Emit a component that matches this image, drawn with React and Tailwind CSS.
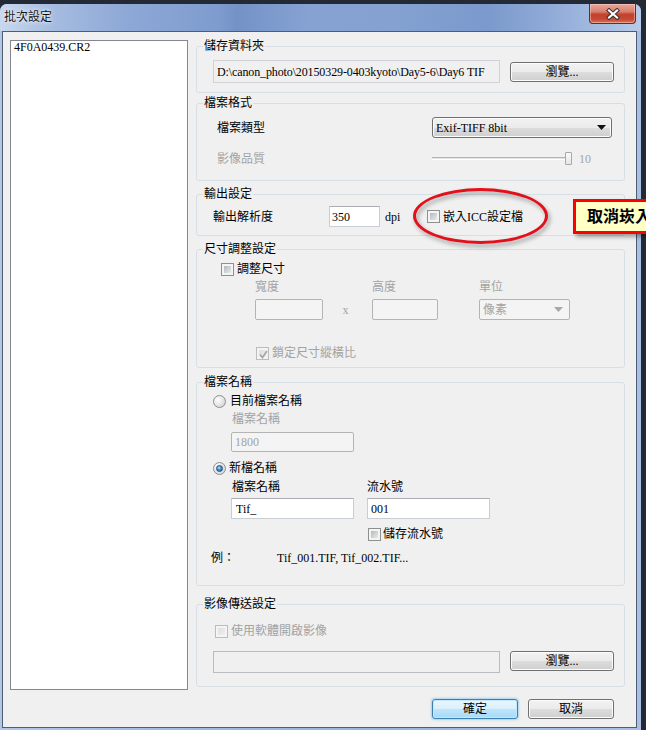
import React from "react";

const BTN =
  "flex items-center justify-center rounded-[3px] border border-[#707070] bg-[linear-gradient(to_bottom,#f2f2f2_0%,#ebebeb_50%,#dddddd_50%,#cfcfcf_100%)] shadow-[inset_0_0_0_1px_#fcfcfc]";
const GREY = "text-[#a3a3a3]";

function Group({ title, className, children }) {
  return (
    <div className={"relative rounded-[3px] border border-[#d5dfe5] " + className}>
      <span className="absolute -top-[8px] left-[6px] bg-[#f0f0f0] px-[1px] leading-[14px] whitespace-nowrap">
        {title}
      </span>
      {children}
    </div>
  );
}

function Checkbox({ disabled, checked, className = "" }) {
  return (
    <span
      className={
        "relative flex h-[13px] w-[13px] shrink-0 border p-[2px] " +
        (disabled ? "border-[#bcbcbc] bg-[#f4f4f4] " : "border-[#8e8f8f] bg-[#f4f4f4] ") +
        className
      }
    >
      <span
        className={
          "flex-1 " +
          (disabled
            ? "bg-[linear-gradient(135deg,#dedede,#efefef)]"
            : "bg-[linear-gradient(135deg,#b3b8be,#e9eaec)]")
        }
      />
      {checked && (
        <svg className="absolute left-[1px] top-[1px]" width="11" height="11" viewBox="0 0 11 11">
          <path d="M2 5.5 L4.5 8.5 L9 2" fill="none" stroke="#a8a8a8" strokeWidth="1.8" />
        </svg>
      )}
    </span>
  );
}

function Radio({ checked }) {
  return (
    <span className="flex h-[13px] w-[13px] shrink-0 items-center justify-center rounded-full border border-[#8e8f8f] bg-[radial-gradient(circle_at_35%_35%,#ffffff_0%,#e8e8e8_45%,#c8cacd_100%)]">
      {checked && (
        <span className="h-[7px] w-[7px] rounded-full border border-[#1b4d7d] bg-[radial-gradient(circle_at_40%_35%,#bfe4ff_0%,#4a9ad8_40%,#14568f_100%)]" />
      )}
    </span>
  );
}

function Input({ className = "", children }) {
  return (
    <div
      className={
        "flex items-center border border-[#c9ced4] border-t-[#abadb3] bg-white pl-[3px] " + className
      }
    >
      {children}
    </div>
  );
}

function DisabledBox({ className = "", children }) {
  return (
    <div
      className={
        "flex items-center rounded-[2px] border border-[#b4b4b4] bg-[#f4f4f4] pl-[3px] text-[#a3a3a3] " +
        className
      }
    >
      {children}
    </div>
  );
}

export default function App() {
  return (
    <div className="relative h-[730px] w-[646px] overflow-hidden bg-[#232a35] pt-[4px] text-[12px] leading-[14px] text-black font-['Liberation_Serif','Noto_Sans_CJK_TC',serif]">
      {/* window */}
      <div className="flex h-[726px] w-[641px] flex-col rounded-t-[7px] bg-[linear-gradient(90deg,#b3c7e3_0%,#a2bae0_30%,#9bb4dc_60%,#a9c0e2_100%)]">
        {/* title bar */}
        <div className="flex h-[27px] shrink-0 items-start justify-between rounded-t-[7px] bg-[linear-gradient(90deg,#c8d8ee_0%,#a6bde0_8%,#8da8d6_20%,#7f9ccf_34%,#7592c7_37%,#86a2d3_48%,#84a1d2_62%,#7b99cc_76%,#8ea9d7_85%,#a8bfe2_95%,#b8cbe8_100%)]">
          <span className="ml-[4px] mt-[6px] leading-[14px] text-[#111] [text-shadow:0_0_5px_rgba(255,255,255,0.95),0_0_2px_rgba(255,255,255,0.9)]">
            批次設定
          </span>
          <div className="mr-[5px] flex h-[20px] w-[47px] items-center justify-center rounded-b-[4px] border border-t-0 border-[#6b2a22] bg-[linear-gradient(to_bottom,#e9a899_0%,#d8806f_40%,#c2412f_55%,#c64a35_80%,#d9735c_100%)] shadow-[inset_0_0_0_1px_rgba(255,220,210,0.45)]">
            <svg width="14" height="12" viewBox="-7 -6 14 12">
              <path d="M-4 -3.5 L4 3.5 M4 -3.5 L-4 3.5" stroke="#3b3030" strokeWidth="4.2" strokeLinecap="square" />
              <path d="M-4 -3.5 L4 3.5 M4 -3.5 L-4 3.5" stroke="#ffffff" strokeWidth="2.2" strokeLinecap="square" />
            </svg>
          </div>
        </div>

        {/* client area */}
        <div className="ml-[2px] flex h-[697px] w-[635px] shrink-0 border border-[#4d5d74] bg-[#f0f0f0]">
          {/* file list */}
          <div className="ml-[7px] mt-[8px] h-[650px] w-[178px] shrink-0 border border-[#828790] bg-white pl-[3px] leading-[13px]">
            4F0A0439.CR2
          </div>

          {/* right column */}
          <div className="ml-[8px] mt-[14px] flex w-[429px] shrink-0 flex-col">
            {/* 儲存資料夾 */}
            <Group title="儲存資料夾" className="h-[47px]">
              <div className="flex items-center pl-[16px] pt-[13px]">
                <div className="flex h-[23px] w-[287px] items-center border border-[#cfd2d6] bg-[#f0f0f0] pl-[3px] whitespace-nowrap tracking-[-0.12px]">
                  {"D:\\canon_photo\\20150329-0403kyoto\\Day5-6\\Day6 TIF"}
                </div>
                <div className={BTN + " ml-[10px] h-[20px] w-[104px]"}>瀏覽...</div>
              </div>
            </Group>

            {/* 檔案格式 */}
            <Group title="檔案格式" className="mt-[10px] h-[78px]">
              <div className="pl-[20px] pt-[13px]">
                <div className="flex h-[21px] items-center">
                  <span className="w-[215px]">檔案類型</span>
                  <div className={BTN + " h-[21px] w-[180px] !justify-between px-[3px]"}>
                    <span>Exif-TIFF 8bit</span>
                    <svg width="9" height="5" viewBox="0 0 9 5" className="mr-[2px]">
                      <path d="M0 0 H9 L4.5 5 Z" fill="#111" />
                    </svg>
                  </div>
                </div>
                <div className={"mt-[10px] flex h-[21px] items-center " + GREY}>
                  <span className="w-[215px]">影像品質</span>
                  <div className="relative flex h-[13px] w-[140px] items-center">
                    <div className="h-[3px] w-[137px] border-t border-b border-[#b2b2b2] border-b-white bg-[#e4e4e4]" />
                    <div className="absolute left-[133px] top-0 h-[13px] w-[7px] rounded-[1px] border border-[#a8a8a8] bg-[linear-gradient(to_bottom,#fafafa,#e6e6e6)]" />
                  </div>
                  <span className="ml-[7px]">10</span>
                </div>
              </div>
            </Group>

            {/* 輸出設定 */}
            <Group title="輸出設定" className="mt-[13px] h-[42px]">
              <div className="flex items-center pl-[16px] pt-[11px]">
                <span className="w-[116px]">輸出解析度</span>
                <Input className="h-[21px] w-[51px] !pl-[2px]">350</Input>
                <span className="ml-[5px] w-[42px]">dpi</span>
                <Checkbox />
                <span className="ml-[3px]">嵌入ICC設定檔</span>
              </div>
            </Group>

            {/* 尺寸調整設定 */}
            <Group title="尺寸調整設定" className="mt-[13px] h-[119px]">
              <div className="pl-[24px] pt-[12px]">
                <div className="flex h-[14px] items-center">
                  <Checkbox />
                  <span className="ml-[3px]">調整尺寸</span>
                </div>
                <div className={"ml-[34px] mt-[4px] flex h-[14px] " + GREY}>
                  <span className="w-[117px]">寬度</span>
                  <span className="w-[107px]">高度</span>
                  <span>單位</span>
                </div>
                <div className="ml-[34px] mt-[5px] flex h-[21px] items-center">
                  <DisabledBox className="h-[21px] w-[68px]" />
                  <span className={"w-[45px] text-center " + GREY}>x</span>
                  <DisabledBox className="ml-[4px] h-[21px] w-[66px]" />
                  <DisabledBox className="ml-[41px] h-[21px] w-[91px] justify-between pr-[6px]">
                    <span>像素</span>
                    <svg width="9" height="5" viewBox="0 0 9 5">
                      <path d="M0 0 H9 L4.5 5 Z" fill="#a8a8a8" />
                    </svg>
                  </DisabledBox>
                </div>
                <div className="ml-[35px] mt-[26px] flex h-[14px] items-center">
                  <Checkbox disabled checked />
                  <span className={"ml-[3px] " + GREY}>鎖定尺寸縱橫比</span>
                </div>
              </div>
            </Group>

            {/* 檔案名稱 */}
            <Group title="檔案名稱" className="mt-[14px] h-[204px]">
              <div className="pl-[16px] pt-[11px]">
                <div className="flex h-[14px] items-center">
                  <Radio />
                  <span className="ml-[4px]">目前檔案名稱</span>
                </div>
                <div className={"ml-[19px] mt-[4px] h-[14px] " + GREY}>檔案名稱</div>
                <DisabledBox className="ml-[18px] mt-[6px] h-[20px] w-[123px] !pl-[3px]">1800</DisabledBox>
                <div className="mt-[9px] flex h-[14px] items-center">
                  <Radio checked />
                  <span className="ml-[3px]">新檔名稱</span>
                </div>
                <div className="ml-[19px] mt-[5px] flex h-[14px]">
                  <span className="w-[135px]">檔案名稱</span>
                  <span>流水號</span>
                </div>
                <div className="ml-[18px] mt-[4px] flex">
                  <Input className="h-[21px] w-[123px] !pl-[4px]">Tif_</Input>
                  <Input className="ml-[13px] h-[21px] w-[123px]">001</Input>
                </div>
                <div className="ml-[155px] mt-[8px] flex h-[14px] items-center">
                  <Checkbox />
                  <span className="ml-[2px]">儲存流水號</span>
                </div>
                <div className="-ml-[2px] mt-[10px] flex h-[14px]">
                  <span className="w-[66px]">例：</span>
                  <span>Tif_001.TIF, Tif_002.TIF...</span>
                </div>
              </div>
            </Group>

            {/* 影像傳送設定 */}
            <Group title="影像傳送設定" className="mt-[18px] h-[83px]">
              <div className="pl-[16px] pt-[19px]">
                <div className="flex h-[14px] items-center">
                  <Checkbox disabled className="ml-[2px]" />
                  <span className={"ml-[3px] " + GREY}>使用軟體開啟影像</span>
                </div>
                <div className="mt-[13px] flex items-start">
                  <div className="h-[22px] w-[287px] border border-[#b9bcc0] bg-[#f0f0f0]" />
                  <div className={BTN + " ml-[10px] h-[20px] w-[104px]"}>瀏覽...</div>
                </div>
              </div>
            </Group>

            {/* buttons */}
            <div className="mt-[12px] flex justify-end gap-[10px] pr-[11px]">
              <div className="flex h-[20px] w-[86px] items-center justify-center rounded-[3px] border border-[#3c7fb1] bg-[linear-gradient(to_bottom,#eaf6fd_0%,#d9f0fc_50%,#bee6fd_50%,#a7d9f5_100%)] shadow-[0_0_2px_1px_rgba(80,170,230,0.45),inset_0_0_0_1px_#c5e7fb]">
                確定
              </div>
              <div className={BTN + " h-[20px] w-[86px]"}>取消</div>
            </div>
          </div>
        </div>
      </div>

      {/* annotation: red ellipse */}
      <div className="absolute left-[413px] top-[188px] h-[56px] w-[135px] rounded-[50%] border-[3px] border-[#e3101b] drop-shadow-[2px_3px_2px_rgba(0,0,0,0.35)]" />

      {/* annotation: callout */}
      <div className="absolute left-[573px] top-[199px] flex h-[35px] w-[110px] items-center border-[3px] border-[#ff0000] bg-[#ffffc6] pl-[11px] shadow-[3px_3px_4px_rgba(0,0,0,0.35)]">
        <span className="whitespace-nowrap text-[16px] font-bold leading-[18px] text-black">取消崁入</span>
      </div>
    </div>
  );
}
